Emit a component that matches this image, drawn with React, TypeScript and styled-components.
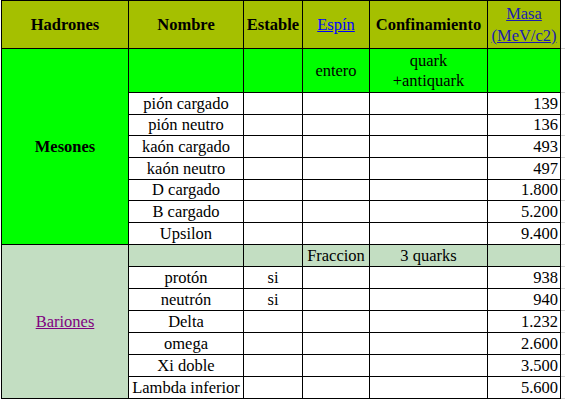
import styled, { createGlobalStyle } from "styled-components"

const GlobalStyle = createGlobalStyle`
  html, body {
    margin: 0;
    padding: 0;
    background: #ffffff;
    overflow: hidden;
  }
`

const HEADER_BG = "#a5c000"
const MESON_BG = "#00ff00"
const BARYON_BG = "#c3dec2"
const FONT = `"Liberation Serif", "Times New Roman", serif`

type Align = "left" | "center" | "right"

const Page = styled.div`
  padding-left: 1px;
`

const Table = styled.table`
  border-collapse: collapse;
  table-layout: fixed;
  width: 568px;
  font-family: ${FONT};
  font-size: 16.5px;
  color: #000;
`

const Th = styled.th`
  height: 47px;
  padding: 0 2px;
  background: ${HEADER_BG};
  border: 1px solid #000;
  font-weight: bold;
  text-align: center;
  vertical-align: middle;
  line-height: 22px;
`

const Td = styled.td<{ $bg?: string; $align?: Align; $bold?: boolean }>`
  padding: 0 2px;
  background: ${(p) => p.$bg ?? "#ffffff"};
  border: 1px solid #000;
  text-align: ${(p) => p.$align ?? "center"};
  font-weight: ${(p) => (p.$bold ? "bold" : "normal")};
  vertical-align: middle;
  line-height: 20px;
  white-space: nowrap;
`

// continues the spreadsheet gridlines past the table's right edge
const Gutter = styled.td`
  border: none;
  border-bottom: 1px solid #d4d4d4;
  padding: 0;
`

const Row = styled.tr<{ $h: number }>`
  height: ${(p) => p.$h}px;
`

const Link = styled.a<{ $color?: string }>`
  color: ${(p) => p.$color ?? "#0000ff"};
  text-decoration: underline;
  font-weight: normal;
`

const mesons: [string, string][] = [
  ["pión cargado", "139"],
  ["pión neutro", "136"],
  ["kaón cargado", "493"],
  ["kaón neutro", "497"],
  ["D cargado", "1.800"],
  ["B cargado", "5.200"],
  ["Upsilon", "9.400"],
]

const mesonHeights = [22, 21, 22, 22, 21, 22, 22]

const baryons: [string, string, string][] = [
  ["protón", "si", "938"],
  ["neutrón", "si", "940"],
  ["Delta", "", "1.232"],
  ["omega", "", "2.600"],
  ["Xi doble", "", "3.500"],
  ["Lambda inferior", "", "5.600"],
]

const App = () => (
  <Page>
    <GlobalStyle />
    <Table>
      <colgroup>
        <col style={{ width: 127 }} />
        <col style={{ width: 115 }} />
        <col style={{ width: 59 }} />
        <col style={{ width: 67 }} />
        <col style={{ width: 118 }} />
        <col style={{ width: 73 }} />
        <col style={{ width: 9 }} />
      </colgroup>
      <tbody>
        <tr>
          <Th>Hadrones</Th>
          <Th>Nombre</Th>
          <Th>Estable</Th>
          <Th>
            <Link href="#">Espín</Link>
          </Th>
          <Th>Confinamiento</Th>
          <Th>
            <Link href="#" $color="#1c1cb0">
              Masa
              <br />
              (MeV/c2)
            </Link>
          </Th>
          <Gutter />
        </tr>
        <Row $h={44}>
          <Td $bg={MESON_BG} $bold rowSpan={8}>
            Mesones
          </Td>
          <Td $bg={MESON_BG} />
          <Td $bg={MESON_BG} />
          <Td $bg={MESON_BG}>entero</Td>
          <Td $bg={MESON_BG}>
            quark
            <br />
            +antiquark
          </Td>
          <Td $bg={MESON_BG} />
          <Gutter />
        </Row>
        {mesons.map(([name, mass], i) => (
          <Row $h={mesonHeights[i]} key={name}>
            <Td>{name}</Td>
            <Td />
            <Td />
            <Td />
            <Td $align="right">{mass}</Td>
            <Gutter />
          </Row>
        ))}
        <Row $h={22}>
          <Td $bg={BARYON_BG} rowSpan={7}>
            <Link href="#" $color="#800080">
              Bariones
            </Link>
          </Td>
          <Td $bg={BARYON_BG} />
          <Td $bg={BARYON_BG} />
          <Td $bg={BARYON_BG}>Fraccion</Td>
          <Td $bg={BARYON_BG}>3 quarks</Td>
          <Td $bg={BARYON_BG} />
          <Gutter />
        </Row>
        {baryons.map(([name, stable, mass]) => (
          <Row $h={22} key={name}>
            <Td>{name}</Td>
            <Td>{stable}</Td>
            <Td />
            <Td />
            <Td $align="right">{mass}</Td>
            <Gutter />
          </Row>
        ))}
      </tbody>
    </Table>
  </Page>
)

export default App
